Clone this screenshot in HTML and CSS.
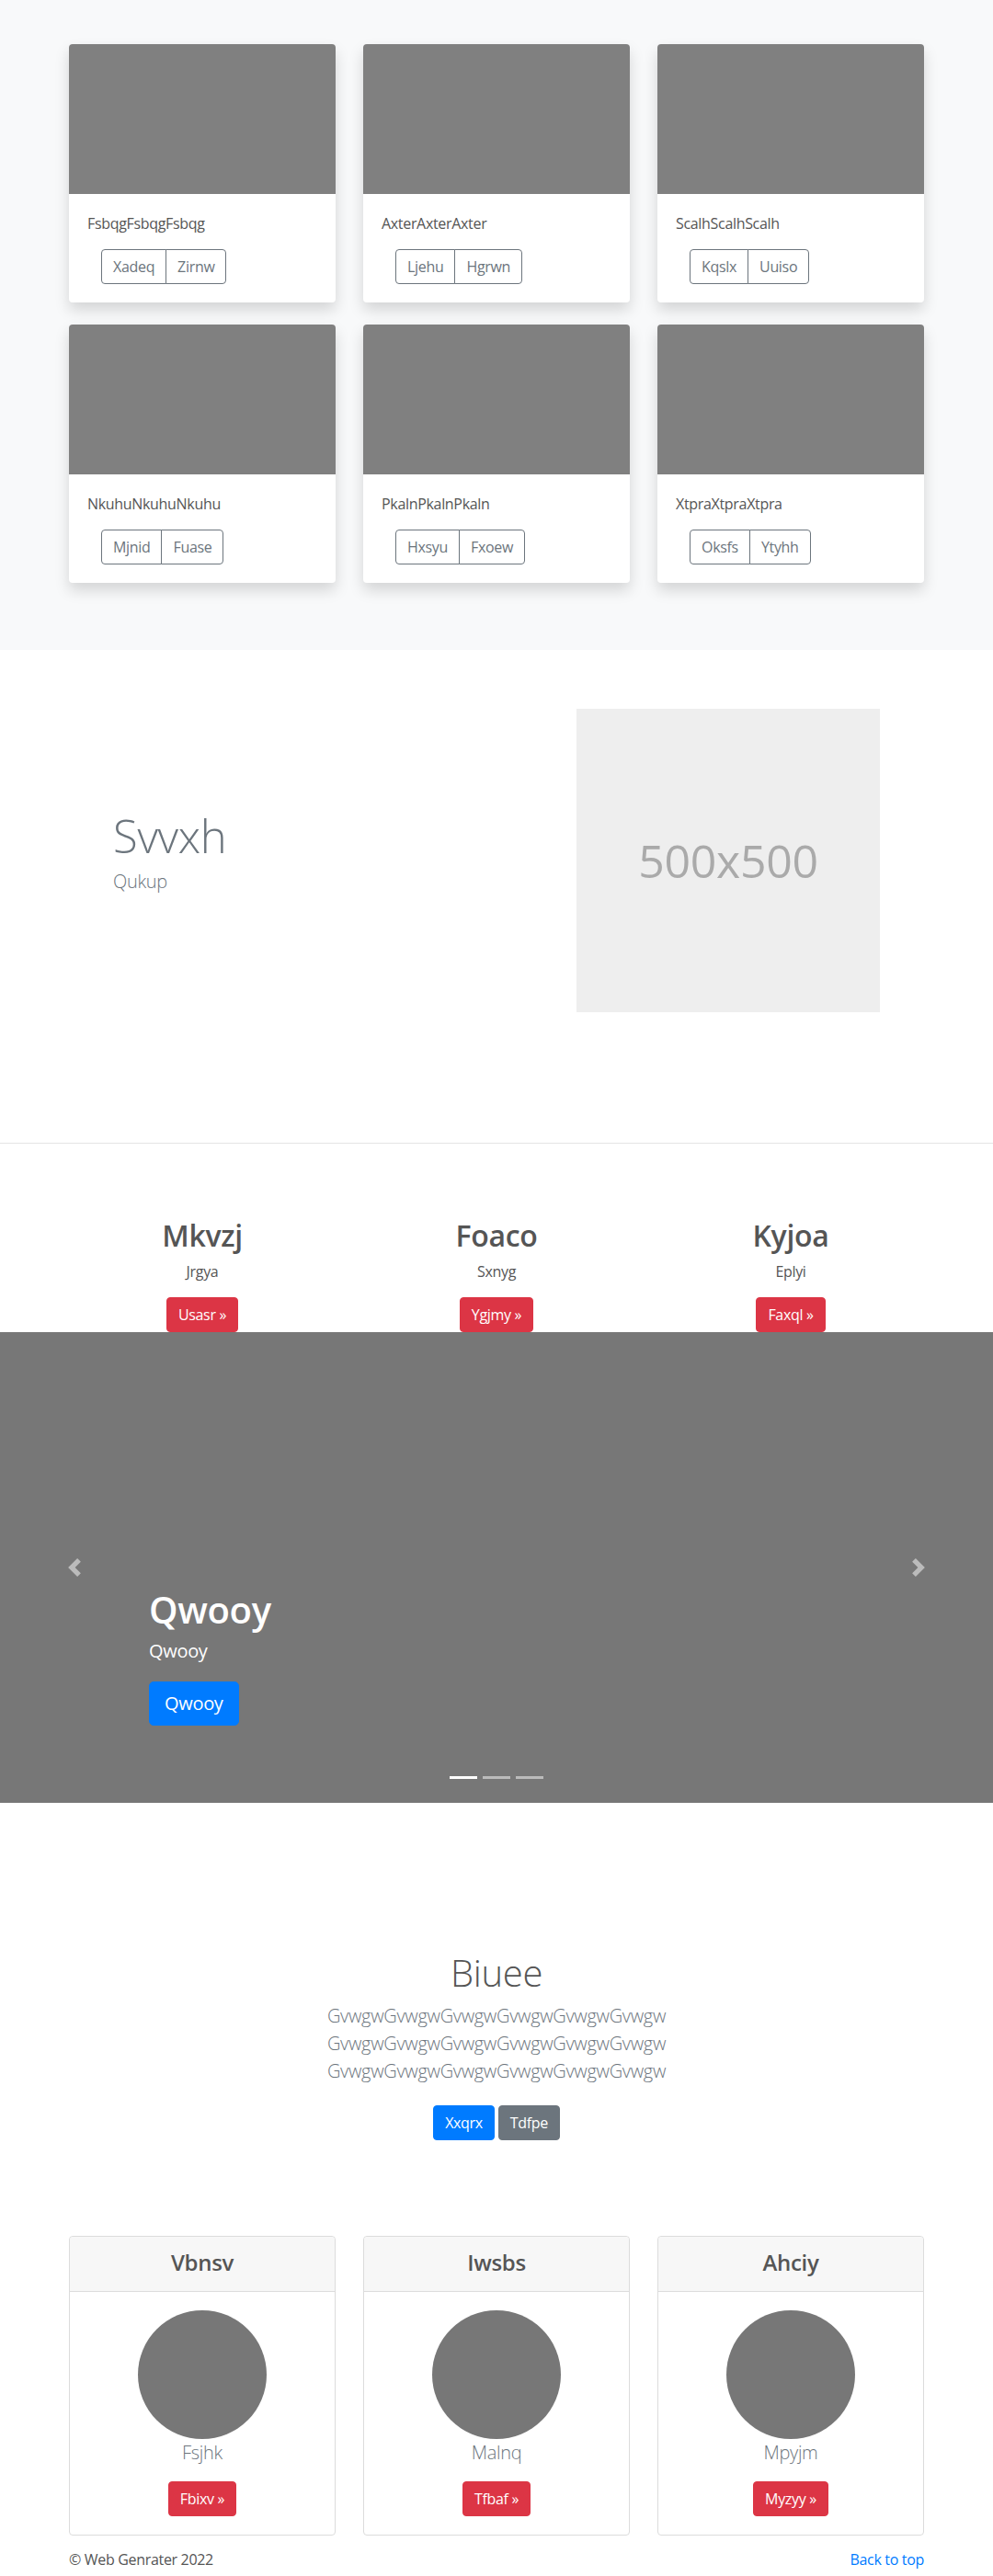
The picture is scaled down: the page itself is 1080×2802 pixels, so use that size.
FILE: index.html
```html
<!DOCTYPE html>
<html lang="en">
<head>
<meta charset="utf-8">
<title>Page</title>
<link rel="stylesheet" href="styles.css">
</head>
<body>
<main>
  <section class="album">
    <div class="container grid3 album-grid">
      <div class="card"><div class="thumb"></div><div class="card-body"><p class="card-text">FsbqgFsbqgFsbqg</p><div class="btn-group"><button class="btn btn-outline">Xadeq</button><button class="btn btn-outline">Zirnw</button></div></div></div>
      <div class="card"><div class="thumb"></div><div class="card-body"><p class="card-text">AxterAxterAxter</p><div class="btn-group"><button class="btn btn-outline">Ljehu</button><button class="btn btn-outline">Hgrwn</button></div></div></div>
      <div class="card"><div class="thumb"></div><div class="card-body"><p class="card-text">ScalhScalhScalh</p><div class="btn-group"><button class="btn btn-outline">Kqslx</button><button class="btn btn-outline">Uuiso</button></div></div></div>
      <div class="card"><div class="thumb"></div><div class="card-body"><p class="card-text">NkuhuNkuhuNkuhu</p><div class="btn-group"><button class="btn btn-outline">Mjnid</button><button class="btn btn-outline">Fuase</button></div></div></div>
      <div class="card"><div class="thumb"></div><div class="card-body"><p class="card-text">PkalnPkalnPkaln</p><div class="btn-group"><button class="btn btn-outline">Hxsyu</button><button class="btn btn-outline">Fxoew</button></div></div></div>
      <div class="card"><div class="thumb"></div><div class="card-body"><p class="card-text">XtpraXtpraXtpra</p><div class="btn-group"><button class="btn btn-outline">Oksfs</button><button class="btn btn-outline">Ytyhh</button></div></div></div>
    </div>
  </section>

  <section class="feature">
    <div class="container feature-row">
      <div class="feature-text">
        <h1 class="feature-title">Svvxh</h1>
        <p class="feature-lead">Qukup</p>
      </div>
      <div class="feature-media">
        <div class="placeholder">500x500</div>
      </div>
    </div>
  </section>

  <section class="marketing">
    <div class="container grid3">
      <div class="mk-col"><h2 class="mk-title">Mkvzj</h2><p class="mk-text">Jrgya</p><a class="btn btn-danger">Usasr »</a></div>
      <div class="mk-col"><h2 class="mk-title">Foaco</h2><p class="mk-text">Sxnyg</p><a class="btn btn-danger">Ygjmy »</a></div>
      <div class="mk-col"><h2 class="mk-title">Kyjoa</h2><p class="mk-text">Eplyi</p><a class="btn btn-danger">Faxql »</a></div>
    </div>
  </section>

  <section class="carousel">
    <ol class="indicators">
      <li class="ind active"></li>
      <li class="ind"></li>
      <li class="ind"></li>
    </ol>
    <a class="ctrl ctrl-prev"><svg width="20" height="20" viewBox="0 0 8 8"><path fill="#fff" d="M5.25 0l-4 4 4 4 1.5-1.5L4.25 4l2.5-2.5L5.25 0z"/></svg></a>
    <div class="caption">
      <h1 class="caption-title">Qwooy</h1>
      <p class="caption-text">Qwooy</p>
      <p class="caption-btn-wrap"><a class="btn btn-primary btn-lg">Qwooy</a></p>
    </div>
    <a class="ctrl ctrl-next"><svg width="20" height="20" viewBox="0 0 8 8"><path fill="#fff" d="M2.75 0l-1.5 1.5L3.75 4l-2.5 2.5L2.75 8l4-4-4-4z"/></svg></a>
  </section>

  <section class="jumbo">
    <h1 class="jumbo-title">Biuee</h1>
    <p class="jumbo-lead">GvwgwGvwgwGvwgwGvwgwGvwgwGvwgw<br>GvwgwGvwgwGvwgwGvwgwGvwgwGvwgw<br>GvwgwGvwgwGvwgwGvwgwGvwgwGvwgw</p>
    <p class="jumbo-btns"><a class="btn btn-primary">Xxqrx</a> <a class="btn btn-secondary">Tdfpe</a></p>
  </section>

  <section class="pricing">
    <div class="container grid3">
      <div class="pcard"><div class="pcard-header"><h4 class="pcard-title">Vbnsv</h4></div><div class="pcard-body"><div class="avatar"></div><p class="pcard-name">Fsjhk</p><a class="btn btn-danger">Fbixv »</a></div></div>
      <div class="pcard"><div class="pcard-header"><h4 class="pcard-title">Iwsbs</h4></div><div class="pcard-body"><div class="avatar"></div><p class="pcard-name">Malnq</p><a class="btn btn-danger">Tfbaf »</a></div></div>
      <div class="pcard"><div class="pcard-header"><h4 class="pcard-title">Ahciy</h4></div><div class="pcard-body"><div class="avatar"></div><p class="pcard-name">Mpyjm</p><a class="btn btn-danger">Myzyy »</a></div></div>
    </div>
  </section>

  <footer class="footer container">
    <p class="copy">© Web Genrater 2022</p>
    <a class="totop">Back to top</a>
  </footer>
</main>
</body>
</html>
```

FILE: styles.css
```css
* { box-sizing: border-box; }
html, body { margin: 0; padding: 0; }
body {
  font-family: "Open Sans", "Noto Sans", "Liberation Sans", sans-serif;
  font-size: 16px;
  line-height: 1.5;
  letter-spacing: -0.02em;
  color: #555;
  background: #fff;
}
p, h1, h2, h4 { margin: 0; }
.container { width: 930px; margin: 0 auto; }
.grid3 { display: grid; grid-template-columns: repeat(3, 290px); column-gap: 30px; }

/* buttons */
.btn {
  display: inline-block;
  font-family: inherit;
  letter-spacing: inherit;
  font-size: 16px;
  line-height: 24px;
  padding: 6px 12px;
  border: 1px solid transparent;
  border-radius: 4px;
  text-decoration: none;
  cursor: pointer;
  background: transparent;
  vertical-align: middle;
}
.btn-outline { color: #6c757d; border-color: #6c757d; background: #fff; }
.btn-group { display: inline-flex; margin-left: 15px; }
.btn-group .btn:first-child { border-top-right-radius: 0; border-bottom-right-radius: 0; }
.btn-group .btn + .btn { margin-left: -1px; border-top-left-radius: 0; border-bottom-left-radius: 0; }
.btn-danger { background: #dc3545; color: #fff; border-color: #dc3545; }
.btn-primary { background: #007bff; color: #fff; border-color: #007bff; }
.btn-secondary { background: #6c757d; color: #fff; border-color: #6c757d; }
.btn-lg { font-size: 20px; line-height: 30px; padding: 8px 16px; border-radius: 5px; }

/* album */
.album { background: #f8f9fa; padding: 48px 0 49px; }
.album-grid { row-gap: 24px; padding-bottom: 24px; }
.card {
  background: #fff;
  border-radius: 4px;
  overflow: hidden;
  box-shadow: 0 8px 16px rgba(0,0,0,0.15);
  height: 281px;
}
.thumb { height: 163px; background: #808080; }
.card-body { padding: 20px; }
.card-text { font-size: 16px; line-height: 24px; margin-bottom: 16px; color: #555; }

/* feature */
.feature { border-bottom: 1px solid #e5e5e5; padding: 64px 0 142px; }
.feature-row { display: flex; align-items: center; }
.feature-text { flex: 1; padding-left: 48px; padding-bottom: 18px; }
.feature-title { font-size: 49px; font-weight: 300; line-height: 1.2; color: #6c757d; margin-bottom: 6px; }
.feature-lead { font-size: 20px; font-weight: 300; line-height: 1.5; color: #6c757d; }
.feature-media { flex: 1; display: flex; justify-content: flex-end; padding-right: 48px; }
.placeholder {
  width: 330px; height: 330px;
  background: #eee;
  color: #aaa;
  font-size: 50px;
  display: flex; align-items: center; justify-content: center;
}

/* marketing */
.marketing { padding-top: 81px; }
.mk-col { text-align: center; }
.mk-title { font-size: 32px; font-weight: 600; line-height: 1.2; margin-bottom: 8px; color: #555; }
.mk-text { font-size: 16px; line-height: 24px; margin-bottom: 16px; color: #555; }

/* carousel */
.carousel { position: relative; height: 512px; background: #777; }
.caption {
  position: absolute; left: 162px; right: 162px; bottom: 48px;
  padding: 20px 0; color: #fff;
}
.caption-title { font-size: 40px; font-weight: 600; line-height: 1.2; margin-bottom: 6px; }
.caption-text { font-size: 20px; line-height: 30px; margin-bottom: 18px; }
.caption-btn-wrap { margin-bottom: 16px; }
.ctrl {
  position: absolute; top: 0; bottom: 0; width: 162px;
  display: flex; align-items: center; justify-content: center;
  opacity: 0.5;
}
.ctrl-prev { left: 0; }
.ctrl-next { right: 0; }
.ctrl svg { display: block; }
.indicators {
  position: absolute; left: 0; right: 0; bottom: 26px;
  margin: 0; padding: 0; list-style: none;
  display: flex; justify-content: center;
}
.ind { width: 30px; height: 3px; margin: 0 3px; background: #fff; opacity: 0.5; }
.ind.active { opacity: 1; }

/* jumbotron */
.jumbo { text-align: center; padding: 161px 0 96px; }
.jumbo-title { font-size: 40px; font-weight: 300; line-height: 1.2; margin-bottom: 8px; color: #555; }
.jumbo-lead { font-size: 20px; font-weight: 300; line-height: 30px; color: #6c757d; margin-bottom: 16px; }
.jumbo-btns { margin: 0; }
.jumbo-btns .btn { margin: 6px 0 8px; }

/* pricing */
.pcard { border: 1px solid #dcdcdc; border-radius: 4px; text-align: center; }
.pcard-header { background: #f7f7f7; border-bottom: 1px solid #dcdcdc; padding: 14px 20px 17px; border-radius: 4px 4px 0 0; }
.pcard-title { font-size: 24px; font-weight: 600; line-height: 28px; color: #555; }
.pcard-body { padding: 20px; }
.avatar { width: 140px; height: 140px; border-radius: 50%; background: #777; margin: 0 auto; }
.pcard-name { font-size: 20px; font-weight: 300; line-height: 30px; color: #6c757d; margin-bottom: 16px; }

/* footer */
.footer { display: flex; justify-content: space-between; align-items: baseline; padding-top: 14px; }
.copy { font-size: 16px; color: #555; }
.totop { font-size: 16px; color: #007bff; text-decoration: none; }
```
